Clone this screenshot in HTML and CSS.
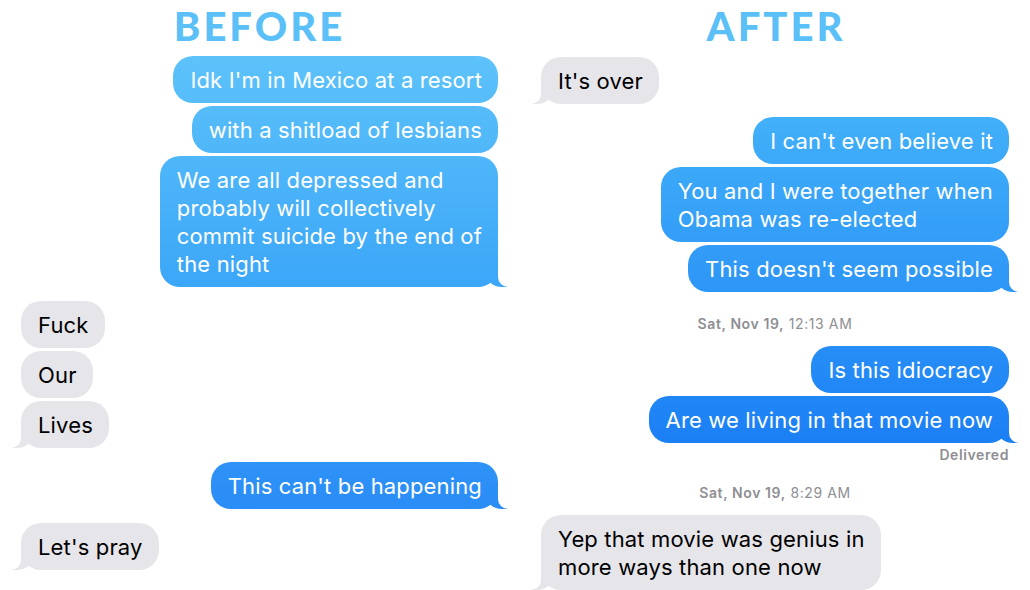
FILE: index.html
```html
<!DOCTYPE html>
<html lang="en">
<head>
    <meta charset="UTF-8">
    <meta name="viewport" content="width=device-width, initial-scale=1.0">
    <title>Before / After</title>
    <link rel="stylesheet" href="styles.css">
</head>
<body>
    <div class="page">
        <div class="col col-before">
            <h1>BEFORE</h1>
            <div class="msg me"><div class="bubble">Idk I'm in Mexico at a resort</div></div>
            <div class="msg me near"><div class="bubble">with a shitload of lesbians</div></div>
            <div class="msg me near"><div class="bubble tail">We are all depressed and<br>probably will collectively<br>commit suicide by the end of<br>the night</div></div>
            <div class="msg them group"><div class="bubble">Fuck</div></div>
            <div class="msg them near"><div class="bubble">Our</div></div>
            <div class="msg them near"><div class="bubble tail">Lives</div></div>
            <div class="msg me group"><div class="bubble tail">This can't be happening</div></div>
            <div class="msg them group"><div class="bubble tail">Let's pray</div></div>
        </div>
        <div class="col col-after">
            <h1>AFTER</h1>
            <div class="msg them"><div class="bubble tail">It's over</div></div>
            <div class="msg me group"><div class="bubble">I can't even believe it</div></div>
            <div class="msg me near"><div class="bubble">You and I were together when<br>Obama was re-elected</div></div>
            <div class="msg me near"><div class="bubble tail">This doesn't seem possible</div></div>
            <div class="stamp"><b>Sat, Nov 19,</b> 12:13 AM</div>
            <div class="msg me"><div class="bubble">Is this idiocracy</div></div>
            <div class="msg me near"><div class="bubble tail">Are we living in that movie now</div></div>
            <div class="delivered">Delivered</div>
            <div class="stamp stamp-late"><b>Sat, Nov 19,</b> 8:29 AM</div>
            <div class="msg them"><div class="bubble tail">Yep that movie was genius in<br>more ways than one now</div></div>
        </div>
    </div>
</body>
</html>
```

FILE: styles.css
```css
body {
    margin: 0;
    background: #fff;
    font-family: Inter, "Noto Sans", Arial, sans-serif;
    overflow: hidden;
}
.page {
    display: grid;
    grid-template-columns: 515px 515px;
    height: 590px;
}
.col {
    display: flex;
    flex-direction: column;
}
.col-before {
    padding: 0 17px 0 21px;
}
.col-after {
    padding: 0 21px 0 26px;
}
h1 {
    margin: 0;
    height: 56px;
    box-sizing: border-box;
    padding-top: 6px;
    font-family: Lato, sans-serif;
    font-weight: 900;
    font-size: 40px;
    line-height: 1;
    letter-spacing: 3px;
    color: #5bc0f8;
    text-align: center;
}
.col-after h1 {
    height: 57px;
    margin-left: 2px;
}
.msg {
    display: flex;
}
.msg.near {
    margin-top: 3px;
}
.msg.group {
    margin-top: 14px;
}
.col-after .msg.group {
    margin-top: 13px;
}
.me {
    justify-content: flex-end;
}
.them {
    justify-content: flex-start;
}
.bubble {
    position: relative;
    padding: 10px 16px 9px 17px;
    border-radius: 20px;
    font-size: 22px;
    line-height: 28px;
    letter-spacing: 0.15px;
}
.them .bubble {
    background: #e5e5ea;
    color: #000;
}
.me .bubble {
    color: #fff;
}
.col-before .me .bubble,
.col-before .me .bubble::before {
    background-image: linear-gradient(to bottom, #5ec3fa 50px, #3ba6f8 290px, #2a8cf6 515px);
    background-attachment: fixed;
}
.col-after .me .bubble,
.col-after .me .bubble::before {
    background-image: linear-gradient(to bottom, #42b0f9 115px, #1b7ff5 445px);
    background-attachment: fixed;
}

/* tails */
.bubble.tail::before,
.bubble.tail::after {
    content: "";
    position: absolute;
    bottom: 0;
    height: 20px;
}
.me .bubble.tail::before {
    right: -10px;
    width: 22px;
    border-bottom-left-radius: 16px 14px;
}
.me .bubble.tail::after {
    right: -14px;
    width: 14px;
    background: #fff;
    border-bottom-left-radius: 10px;
}
.them .bubble.tail::before {
    left: -10px;
    width: 22px;
    background: #e5e5ea;
    border-bottom-right-radius: 16px 14px;
}
.them .bubble.tail::after {
    left: -14px;
    width: 14px;
    background: #fff;
    border-bottom-right-radius: 10px;
}

.stamp,
.delivered {
    font-size: 14px;
    line-height: 16px;
    letter-spacing: 0.6px;
    color: #8e8e93;
}
.stamp {
    text-align: center;
    margin: 24px 0 14px;
}
.stamp b,
.delivered {
    font-weight: 600;
}
.stamp-late {
    margin-top: 22px;
}
.delivered {
    text-align: right;
    margin-top: 4px;
}
```
